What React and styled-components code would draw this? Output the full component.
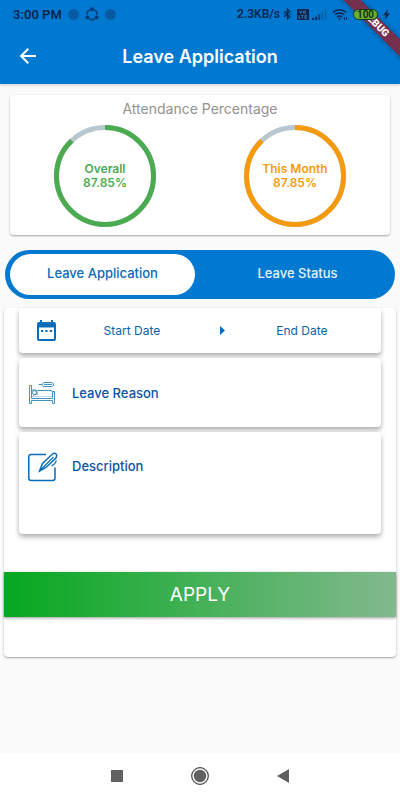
import React, { useState } from "react";
import styled, { createGlobalStyle } from "styled-components";

const GlobalStyle = createGlobalStyle`
    * {
        box-sizing: border-box;
    }
    body {
        margin: 0;
        background: #fafafa;
        font-family: Inter, "Liberation Sans", sans-serif;
    }
    button, input, textarea {
        font-family: inherit;
        border: 0;
        padding: 0;
        margin: 0;
        background: none;
    }
    button {
        cursor: pointer;
    }
`;

const Page = styled.div`
    min-height: 100vh;
    display: flex;
    flex-direction: column;
`;

const Header = styled.header`
    position: relative;
    overflow: hidden;
    background: #0279d1;
    box-shadow: 0 1px 3px rgba(0, 0, 0, 0.2);
`;

const StatusBar = styled.div`
    display: flex;
    align-items: center;
    justify-content: space-between;
    height: 28px;
    padding: 0 10px 0 13px;
    color: #06264f;
    font-family: Roboto, sans-serif;
`;

const StatusGroup = styled.div`
    display: flex;
    align-items: center;
    gap: ${({ $gap }) => $gap}px;
`;

const Clock = styled.span`
    font-size: 13px;
    font-weight: 600;
`;

const Speed = styled.span`
    font-size: 12px;
    font-weight: 600;
`;

const Dot = styled.span`
    width: 11px;
    height: 11px;
    border-radius: 50%;
    background: #075ba3;
`;

const Battery = styled.span`
    position: relative;
    z-index: 2;
    width: 25px;
    height: 11px;
    border: 1px solid #17331f;
    border-radius: 6px;
    background: #67b32e;
    color: #10280f;
    font-size: 10px;
    font-weight: 600;
    line-height: 9px;
    text-align: center;
`;

const DebugBanner = styled.div`
    position: absolute;
    top: 18px;
    right: -26px;
    width: 100px;
    height: 12px;
    background: #762f4d;
    box-shadow: 0 0 5px rgba(0, 0, 0, 0.4);
    color: #fff;
    font-family: Roboto, sans-serif;
    font-size: 10px;
    font-weight: 900;
    line-height: 12px;
    text-align: center;
    transform: rotate(45deg);
`;

const AppBar = styled.div`
    display: grid;
    grid-template-columns: 56px 1fr 56px;
    align-items: center;
    height: 56px;
`;

const BackButton = styled.button`
    display: flex;
    justify-content: center;
    align-items: center;
    height: 48px;
`;

const Title = styled.h1`
    margin: 0;
    color: #fff;
    font-size: 18px;
    font-weight: 600;
    text-align: center;
`;

const Main = styled.main`
    flex: 1;
`;

const AttendanceCard = styled.section`
    margin: 11px 10px 15px;
    padding: 4px 0 8px;
    border-radius: 4px;
    background: #fff;
    box-shadow: 0 1px 2px rgba(0, 0, 0, 0.35);
`;

const CardTitle = styled.h2`
    margin: 0 0 6px;
    color: #929292;
    font-size: 14px;
    font-weight: 400;
    line-height: 20px;
    text-align: center;
`;

const Rings = styled.div`
    display: grid;
    grid-template-columns: 1fr 1fr;
    justify-items: center;
`;

const RingBox = styled.div`
    display: grid;
    place-items: center;

    > * {
        grid-area: 1 / 1;
    }
`;

const RingText = styled.div`
    color: ${({ $color }) => $color};
    font-size: 12px;
    font-weight: 600;
    line-height: 14px;
    text-align: center;
`;

const Tabs = styled.div`
    display: grid;
    grid-template-columns: 1fr 1fr;
    height: 49px;
    margin: 0 5px 9px;
    border-radius: 25px;
    background: #0279d1;
`;

const Tab = styled.button`
    margin: 4px 5px;
    padding-bottom: 3px;
    border-radius: 21px;
    background: ${({ $active }) => ($active ? "#fff" : "transparent")};
    color: ${({ $active }) => ($active ? "#0a6ab5" : "#e4f3fd")};
    font-size: 13px;
    font-weight: 500;
`;

const FormCard = styled.form`
    margin: 0 4px;
    padding-bottom: 40px;
    border-radius: 4px;
    background: #fff;
    box-shadow: 0 1px 2px rgba(0, 0, 0, 0.35);
`;

const Fields = styled.div`
    display: flex;
    flex-direction: column;
    gap: 5px;
    padding: 0 15px 38px;
`;

const FieldCard = styled.div`
    display: grid;
    border-radius: 4px;
    background: #fff;
    box-shadow: 0 3px 5px rgba(0, 0, 0, 0.32);
`;

const DateRow = styled(FieldCard)`
    grid-template-columns: 54px 5fr 64px 4fr;
    justify-items: center;
    align-items: center;
    height: 45px;
    padding-right: 32px;
`;

const DateButton = styled.button`
    height: 32px;
    color: #0a62ac;
    font-size: 12px;
    font-weight: 400;
    white-space: nowrap;
`;

const TextRow = styled(FieldCard)`
    grid-template-columns: 44px 1fr;
    height: ${({ $height }) => $height}px;
    padding-left: 9px;
`;

const IconLabel = styled.label`
    display: flex;
    align-items: center;
    height: 69px;
`;

const fieldText = `
    width: 100%;
    outline: none;
    color: #0a55a3;
    font-size: 13px;
    font-weight: 500;
    line-height: 20px;

    &::placeholder {
        color: #0a55a3;
        opacity: 1;
    }
`;

const TextInput = styled.input`
    ${fieldText}
`;

const TextArea = styled.textarea`
    ${fieldText}
    && {
        padding-top: 24px;
    }
    resize: none;
`;

const ApplyButton = styled.button`
    display: block;
    width: 100%;
    height: 45px;
    background: linear-gradient(90deg, #05a81f, #44b157 50%, #82b98e);
    box-shadow: 0 1px 3px rgba(0, 0, 0, 0.4);
    color: #fff;
    font-size: 19px;
    font-weight: 400;
`;

const NavBar = styled.nav`
    display: flex;
    justify-content: center;
    align-items: center;
    gap: 53px;
    height: 47px;
    padding-bottom: 2px;
    background: #fff;
`;

const NavButton = styled.button`
    display: flex;
    justify-content: center;
    align-items: center;
    width: 30px;
    height: 30px;
`;

const ShareIcon = () => (
    <svg width="14" height="14" viewBox="0 0 14 14" fill="none" stroke="#083a74" strokeWidth="1.5">
        <path d="M4.6 2.8A5 5 0 0 0 2 7.8M9.4 2.8A5 5 0 0 1 12 7.8M4.4 12a5 5 0 0 0 5.2 0" />
        <g fill="#083a74" stroke="none">
            <circle cx="7" cy="2.2" r="2" />
            <circle cx="2.4" cy="10.6" r="2" />
            <circle cx="11.6" cy="10.6" r="2" />
        </g>
    </svg>
);

const BluetoothIcon = () => (
    <svg width="9" height="12" viewBox="0 0 9 12" fill="none" stroke="#06264f" strokeWidth="1.2">
        <path d="M1.2 3.2l5.6 5.4-2.4 2.4V1l2.4 2.4-5.6 5.4" />
        <path d="M.3 6h1.2M7.4 6h1.2" />
    </svg>
);

const VolteIcon = () => (
    <svg width="12" height="11" viewBox="0 0 12 11">
        <rect width="12" height="11" rx="1" fill="#06264f" />
        <g fill="none" stroke="#4a93cf" strokeWidth="0.7">
            <path d="M2.4 1.5l1.3 3L5 1.5M6.5 2.2h2v2h-2z" />
            <path d="M2 6v3.400h1.500M4.200 6.300h2.200M5.300 6.300v3.200M10 6.300H8v3.100h2M8 7.800h1.800" />
        </g>
    </svg>
);

const SignalIcon = () => (
    <svg width="15" height="11" viewBox="0 0 15 11" fill="#06264f">
        <path d="M0 9h2v2H0zM3.2 7.5h2V11h-2z" />
        <path d="M6.4 5h1.8v6H6.4z" fillOpacity="0.7" />
        <path d="M9.6 2.5h1.6V11H9.6zM12.8 0h1.6v11h-1.6z" fillOpacity="0.3" />
    </svg>
);

const WifiIcon = () => (
    <svg width="16" height="13" viewBox="0 0 16 13" fill="none" stroke="#06264f" strokeWidth="1.5">
        <path d="M.8 4.4a9.6 9.6 0 0 1 13.4 0M2.9 6.8a6.6 6.6 0 0 1 9.2 0M5 9.1a3.7 3.7 0 0 1 5 0" />
        <circle cx="7.5" cy="11" r="1" fill="#06264f" stroke="none" />
        <path d="M12.3 9v3M14.5 9v3" strokeWidth="1" />
    </svg>
);

const BoltIcon = () => (
    <svg width="7" height="11" viewBox="0 0 7 11" fill="#06264f">
        <path d="M5 0L0 6.3h2.8L1.8 11 7 4.6H4z" />
    </svg>
);

const BackIcon = () => (
    <svg width="18" height="16" viewBox="0 0 18 16" fill="none" stroke="#fff" strokeWidth="2">
        <path d="M17 8H2M9.3 .8L2.1 8l7.2 7.2" />
    </svg>
);

const CalendarIcon = () => (
    <svg width="19" height="21" viewBox="0 0 19 21" fill="#0a6cb8">
        <path
            fillRule="evenodd"
            d="M3 0h2v2h9V0h2v2h1a2 2 0 0 1 2 2v15a2 2 0 0 1-2 2H2a2 2 0 0 1-2-2V4a2 2 0 0 1 2-2h1zM2 7.5V19h15V7.5z"
        />
        <path d="M4 10h2.2v2H4zM8.4 10h2.2v2H8.4zM12.8 10H15v2h-2.2z" />
    </svg>
);

const BedIcon = () => (
    <svg width="28" height="24" viewBox="0 0 28 24" fill="none" stroke="#3f90c3" strokeWidth="1">
        <path d="M1.5 4.5h2v13h21v-7h2v12h-2v-3h-21v3h-2z" />
        <path d="M9.5 9.500h12.500a3 3 0 0 1 3 3" />
        <path d="M3.5 15.500h21" strokeDasharray="2 1" strokeOpacity="0.5" />
        <path d="M4 9h3.500l1.500 1v4M5 14.500l4-2" />
        <circle cx="6.500" cy="11.500" r="2" />
        <path d="M10.500 3.500h4M15.500 1.500h8l2 1v2l-2 1h-8l-1.500-2zM16 3.500h8" />
    </svg>
);

const EditIcon = () => (
    <svg width="30" height="30" viewBox="0 0 30 30" fill="none" stroke="#0a6cb8" strokeWidth="1.5">
        <path d="M18 2.500H3A2.200 2.200 0 0 0 .8 4.700v21.600A2.200 2.200 0 0 0 3 28.500h21.800a2.200 2.200 0 0 0 2.200-2.200V15.500" />
        <path d="M11.500 19l3-7.500L24.500 2c1.500-1.200 4.300-.8 4.200 1.500L28 6 18 15.500z" />
        <path d="M11.500 19L25.500 5M28.300 8.500c-.3 2-1.500 3.500-4.500 5.500" strokeWidth="1.200" />
    </svg>
);

const ArrowIcon = () => (
    <svg width="5" height="9" viewBox="0 0 5 9" fill="#0a6cb8">
        <path d="M0 0l5 4.500L0 9z" />
    </svg>
);

const Ring = ({ label, percent, color }) => {
    const radius = 48.5;
    const length = 2 * Math.PI * radius;
    return (
        <RingBox>
            <svg width="102" height="102" viewBox="0 0 102 102" fill="none" strokeWidth="5">
                <circle cx="51" cy="51" r={radius} stroke="#b8c7ce" />
                <circle
                    cx="51"
                    cy="51"
                    r={radius}
                    stroke={color}
                    strokeDasharray={`${(length * percent) / 100} ${length}`}
                    transform="rotate(-90 51 51)"
                />
            </svg>
            <RingText $color={color}>
                {label}
                <br />
                {percent}%
            </RingText>
        </RingBox>
    );
};

const tabs = ["Leave Application", "Leave Status"];

export default function App() {
    const [active, setActive] = useState(tabs[0]);

    return (
        <Page>
            <GlobalStyle />
            <Header>
                <StatusBar>
                    <StatusGroup $gap={6}>
                        <Clock>3:00 PM</Clock>
                        <Dot />
                        <ShareIcon />
                        <Dot />
                    </StatusGroup>
                    <StatusGroup $gap={5}>
                        <StatusGroup $gap={3}>
                            <Speed>2.3KB/s</Speed>
                            <BluetoothIcon />
                        </StatusGroup>
                        <StatusGroup $gap={3}>
                            <VolteIcon />
                            <SignalIcon />
                        </StatusGroup>
                        <WifiIcon />
                        <Battery>100</Battery>
                        <BoltIcon />
                    </StatusGroup>
                </StatusBar>
                <AppBar>
                    <BackButton type="button" aria-label="Back">
                        <BackIcon />
                    </BackButton>
                    <Title>Leave Application</Title>
                </AppBar>
                <DebugBanner>DEBUG</DebugBanner>
            </Header>
            <Main>
                <AttendanceCard>
                    <CardTitle>Attendance Percentage</CardTitle>
                    <Rings>
                        <Ring label="Overall" percent={87.85} color="#4bab50" />
                        <Ring label="This Month" percent={87.85} color="#f59a0c" />
                    </Rings>
                </AttendanceCard>
                <Tabs role="tablist">
                    {tabs.map(tab => (
                        <Tab
                            key={tab}
                            type="button"
                            role="tab"
                            aria-selected={tab === active}
                            $active={tab === active}
                            onClick={() => setActive(tab)}
                        >
                            {tab}
                        </Tab>
                    ))}
                </Tabs>
                <FormCard onSubmit={e => e.preventDefault()}>
                    <Fields>
                        <DateRow>
                            <CalendarIcon />
                            <DateButton type="button">Start Date</DateButton>
                            <ArrowIcon />
                            <DateButton type="button">End Date</DateButton>
                        </DateRow>
                        <TextRow $height={69}>
                            <IconLabel htmlFor="reason" aria-label="Leave Reason">
                                <BedIcon />
                            </IconLabel>
                            <TextInput id="reason" placeholder="Leave Reason" />
                        </TextRow>
                        <TextRow $height={102}>
                            <IconLabel htmlFor="description" aria-label="Description">
                                <EditIcon />
                            </IconLabel>
                            <TextArea id="description" placeholder="Description" />
                        </TextRow>
                    </Fields>
                    <ApplyButton type="submit">APPLY</ApplyButton>
                </FormCard>
            </Main>
            <NavBar>
                <NavButton type="button" aria-label="Recent apps">
                    <svg width="12" height="12" viewBox="0 0 12 12">
                        <rect width="12" height="12" fill="#606060" />
                    </svg>
                </NavButton>
                <NavButton type="button" aria-label="Home">
                    <svg width="18" height="18" viewBox="0 0 18 18">
                        <circle cx="9" cy="9" r="8.3" fill="none" stroke="#444" strokeWidth="1.2" />
                        <circle cx="9" cy="9" r="6.2" fill="#606060" />
                    </svg>
                </NavButton>
                <NavButton type="button" aria-label="Back to previous screen">
                    <svg width="12" height="14" viewBox="0 0 12 14">
                        <path d="M12 0v14L0 7z" fill="#606060" />
                    </svg>
                </NavButton>
            </NavBar>
        </Page>
    );
}
